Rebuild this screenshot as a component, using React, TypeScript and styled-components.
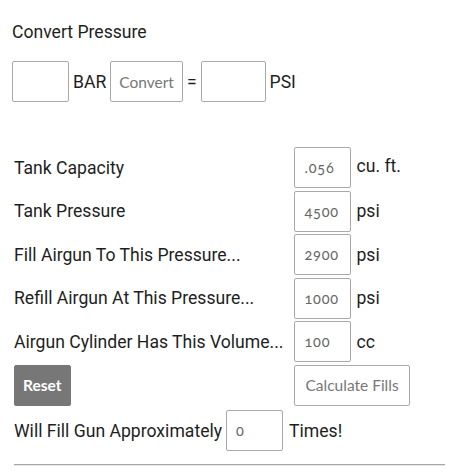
import styled, { createGlobalStyle } from 'styled-components';

const GlobalStyle = createGlobalStyle`
  body {
    margin: 0;
    background: #fff;
    font-family: Roboto, "Liberation Sans", sans-serif;
    color: #1e1e1e;
  }
`;

const Page = styled.div`
  padding: 22px 17px 0 12px;
  font-size: 17.6px;
`;

const Title = styled.div`
  line-height: 21px;
`;

const ConvertRow = styled.div`
  display: flex;
  align-items: center;
  gap: 4px;
  margin-top: 18px;
`;

const Field = styled.input<{ $width?: number }>`
  box-sizing: border-box;
  width: ${(p) => p.$width ?? 57}px;
  height: 41px;
  border: 1px solid #a9a9a9;
  border-radius: 2px;
  padding: 0 9px;
  font-family: Lato, "Open Sans", sans-serif;
  font-variant-numeric: oldstyle-nums;
  font-size: 14.5px;
  letter-spacing: 0.8px;
  color: #666;
  background: #fff;
`;

const Button = styled.button<{ $dark?: boolean; $pad?: number }>`
  box-sizing: border-box;
  height: 41px;
  padding: 0 ${(p) => p.$pad ?? 10}px;
  border: 1px solid ${(p) => (p.$dark ? '#777' : '#a9a9a9')};
  border-radius: 2px;
  background: ${(p) => (p.$dark ? '#777' : '#fff')};
  color: ${(p) => (p.$dark ? '#fff' : '#777')};
  font-family: Lato, "Open Sans", sans-serif;
  font-size: 15.5px;
  font-weight: ${(p) => (p.$dark ? 700 : 400)};
  cursor: pointer;
`;

const Unit = styled.span<{ $gap?: number }>`
  margin-left: ${(p) => p.$gap ?? 0}px;
`;

const FillTable = styled.div`
  display: grid;
  grid-template-columns: max-content auto 1fr;
  row-gap: 2.5px;
  align-items: center;
  margin-top: 45px;
  padding-left: 2px;
`;

const Label = styled.div`
  padding-right: 11px;
`;

const Cell = styled.div`
  display: flex;
  align-items: center;
`;

const UnitCell = styled.div<{ $lift?: boolean }>`
  padding-left: 5px;
  margin-top: ${(p) => (p.$lift ? '-4px' : '0')};
`;

const ResultRow = styled.div`
  display: flex;
  align-items: center;
  margin-top: 4.5px;
  padding-left: 2px;
  gap: 4px;
`;

const Rule = styled.hr`
  margin: 13px 0 0 2px;
  border: 0;
  border-top: 1px solid #a6a6a6;
  border-bottom: 1px solid #e6e6e6;
`;

const rows = [
  { label: 'Tank Capacity', value: '.056', unit: 'cu. ft.', lift: true },
  { label: 'Tank Pressure', value: '4500', unit: 'psi', lift: false },
  { label: 'Fill Airgun To This Pressure...', value: '2900', unit: 'psi', lift: false },
  { label: 'Refill Airgun At This Pressure...', value: '1000', unit: 'psi', lift: false },
  { label: 'Airgun Cylinder Has This Volume...', value: '100', unit: 'cc', lift: false },
];

export default function App() {
  return (
    <>
      <GlobalStyle />
      <Page>
        <Title>Convert Pressure</Title>
        <ConvertRow>
          <Field />
          <Unit>BAR</Unit>
          <Button $pad={8}>Convert</Button>
          <Unit>=</Unit>
          <Field $width={65} />
          <Unit>PSI</Unit>
        </ConvertRow>

        <FillTable>
          {rows.map((row) => [
            <Label key={`l-${row.label}`}>{row.label}</Label>,
            <Cell key={`c-${row.label}`}>
              <Field defaultValue={row.value} />
            </Cell>,
            <UnitCell key={`u-${row.label}`} $lift={row.lift}>
              {row.unit}
            </UnitCell>,
          ])}
          <Label>
            <Button $dark $pad={8}>
              Reset
            </Button>
          </Label>
          <Cell style={{ gridColumn: 'span 2' }}>
            <Button>Calculate Fills</Button>
          </Cell>
        </FillTable>

        <ResultRow>
          <span>Will Fill Gun Approximately</span>
          <Field defaultValue="0" />
          <Unit $gap={2}>Times!</Unit>
        </ResultRow>

        <Rule />
      </Page>
    </>
  );
}
